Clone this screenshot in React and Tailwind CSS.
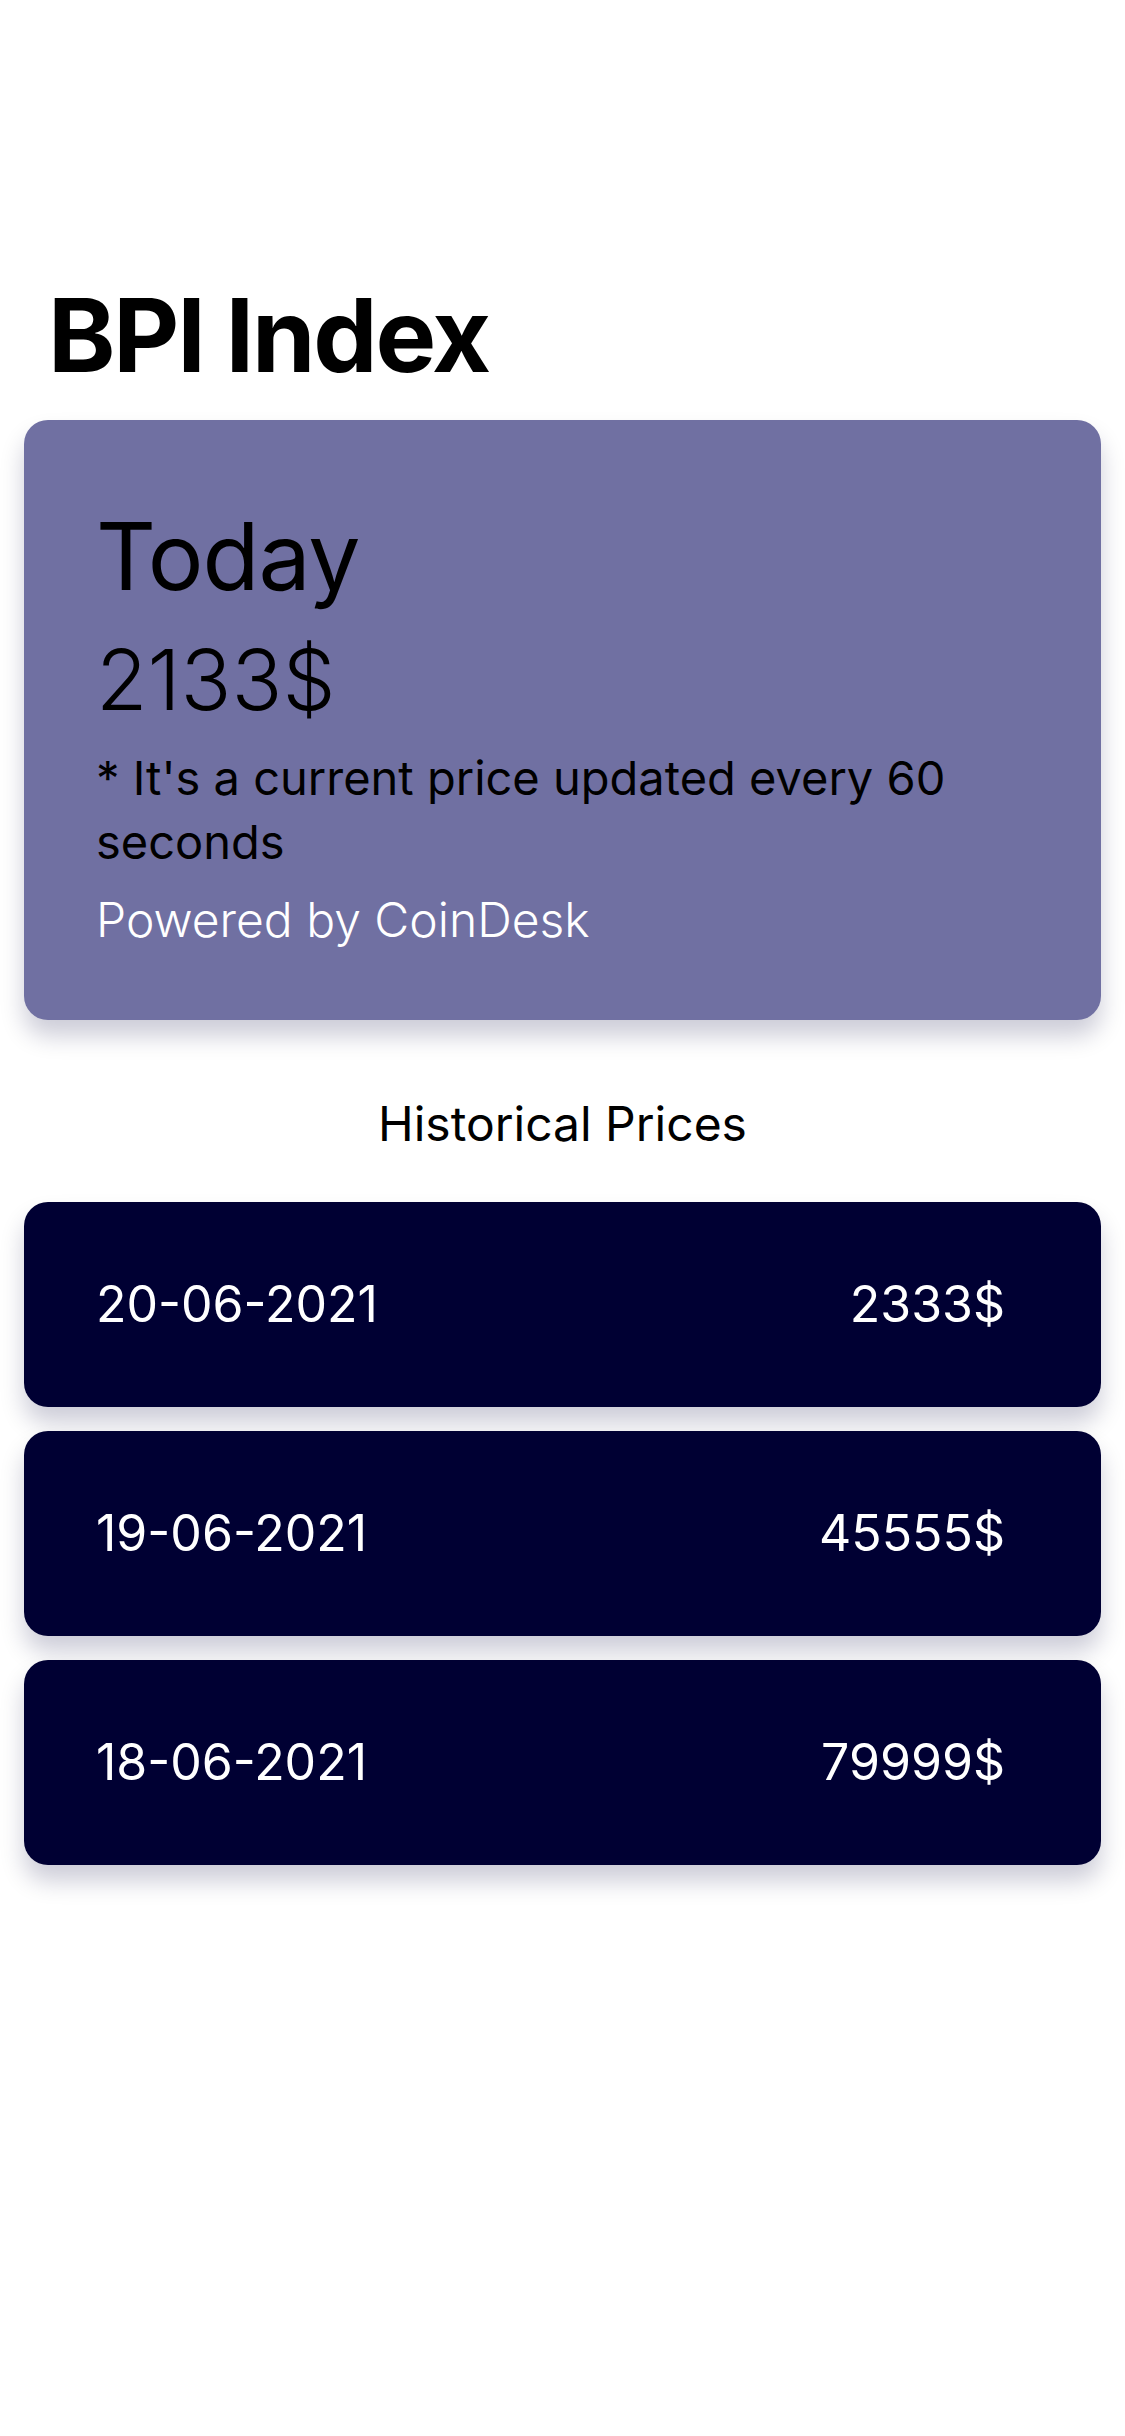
const history = [
  { date: '20-06-2021', price: '2333$' },
  { date: '19-06-2021', price: '45555$' },
  { date: '18-06-2021', price: '79999$' },
];

export default function App() {
  return (
    <div className="min-h-[2436px] bg-white font-['Inter','Noto_Sans',sans-serif] text-black">
      <div className="pt-[274px] px-[24px]">
        <h1 className="pl-[24px] text-[102px] leading-[122px] font-bold tracking-[-2.2px]">
          BPI Index
        </h1>

        <div className="mt-[24px] rounded-[24px] bg-[#7070a2] px-[72px] pt-[75px] pb-[68px] shadow-[0_16px_24px_rgba(0,0,60,0.2)]">
          <div className="text-[93px] leading-[122px] tracking-[-1px]">Today</div>
          <div className="mt-[13px] text-[84px] leading-[100px] font-light">2133$</div>
          <p className="mt-[16px] text-[47px] leading-[64px]">
            * It's a current price updated every 60 seconds
          </p>
          <div className="mt-[14px] text-[48px] leading-[64px] font-light text-white">
            Powered by CoinDesk
          </div>
        </div>

        <h2 className="mt-[72px] text-center text-[48px] leading-[64px]">Historical Prices</h2>

        <div className="mt-[46px] flex flex-col gap-[24px]">
          {history.map((h) => (
            <div
              key={h.date}
              className="flex h-[205px] items-center justify-between rounded-[24px] bg-[#000033] pl-[72px] pr-[96px] text-[50px] text-white shadow-[0_16px_24px_rgba(0,0,60,0.2)]"
            >
              <span>{h.date}</span>
              <span>{h.price}</span>
            </div>
          ))}
        </div>
      </div>
    </div>
  );
}
